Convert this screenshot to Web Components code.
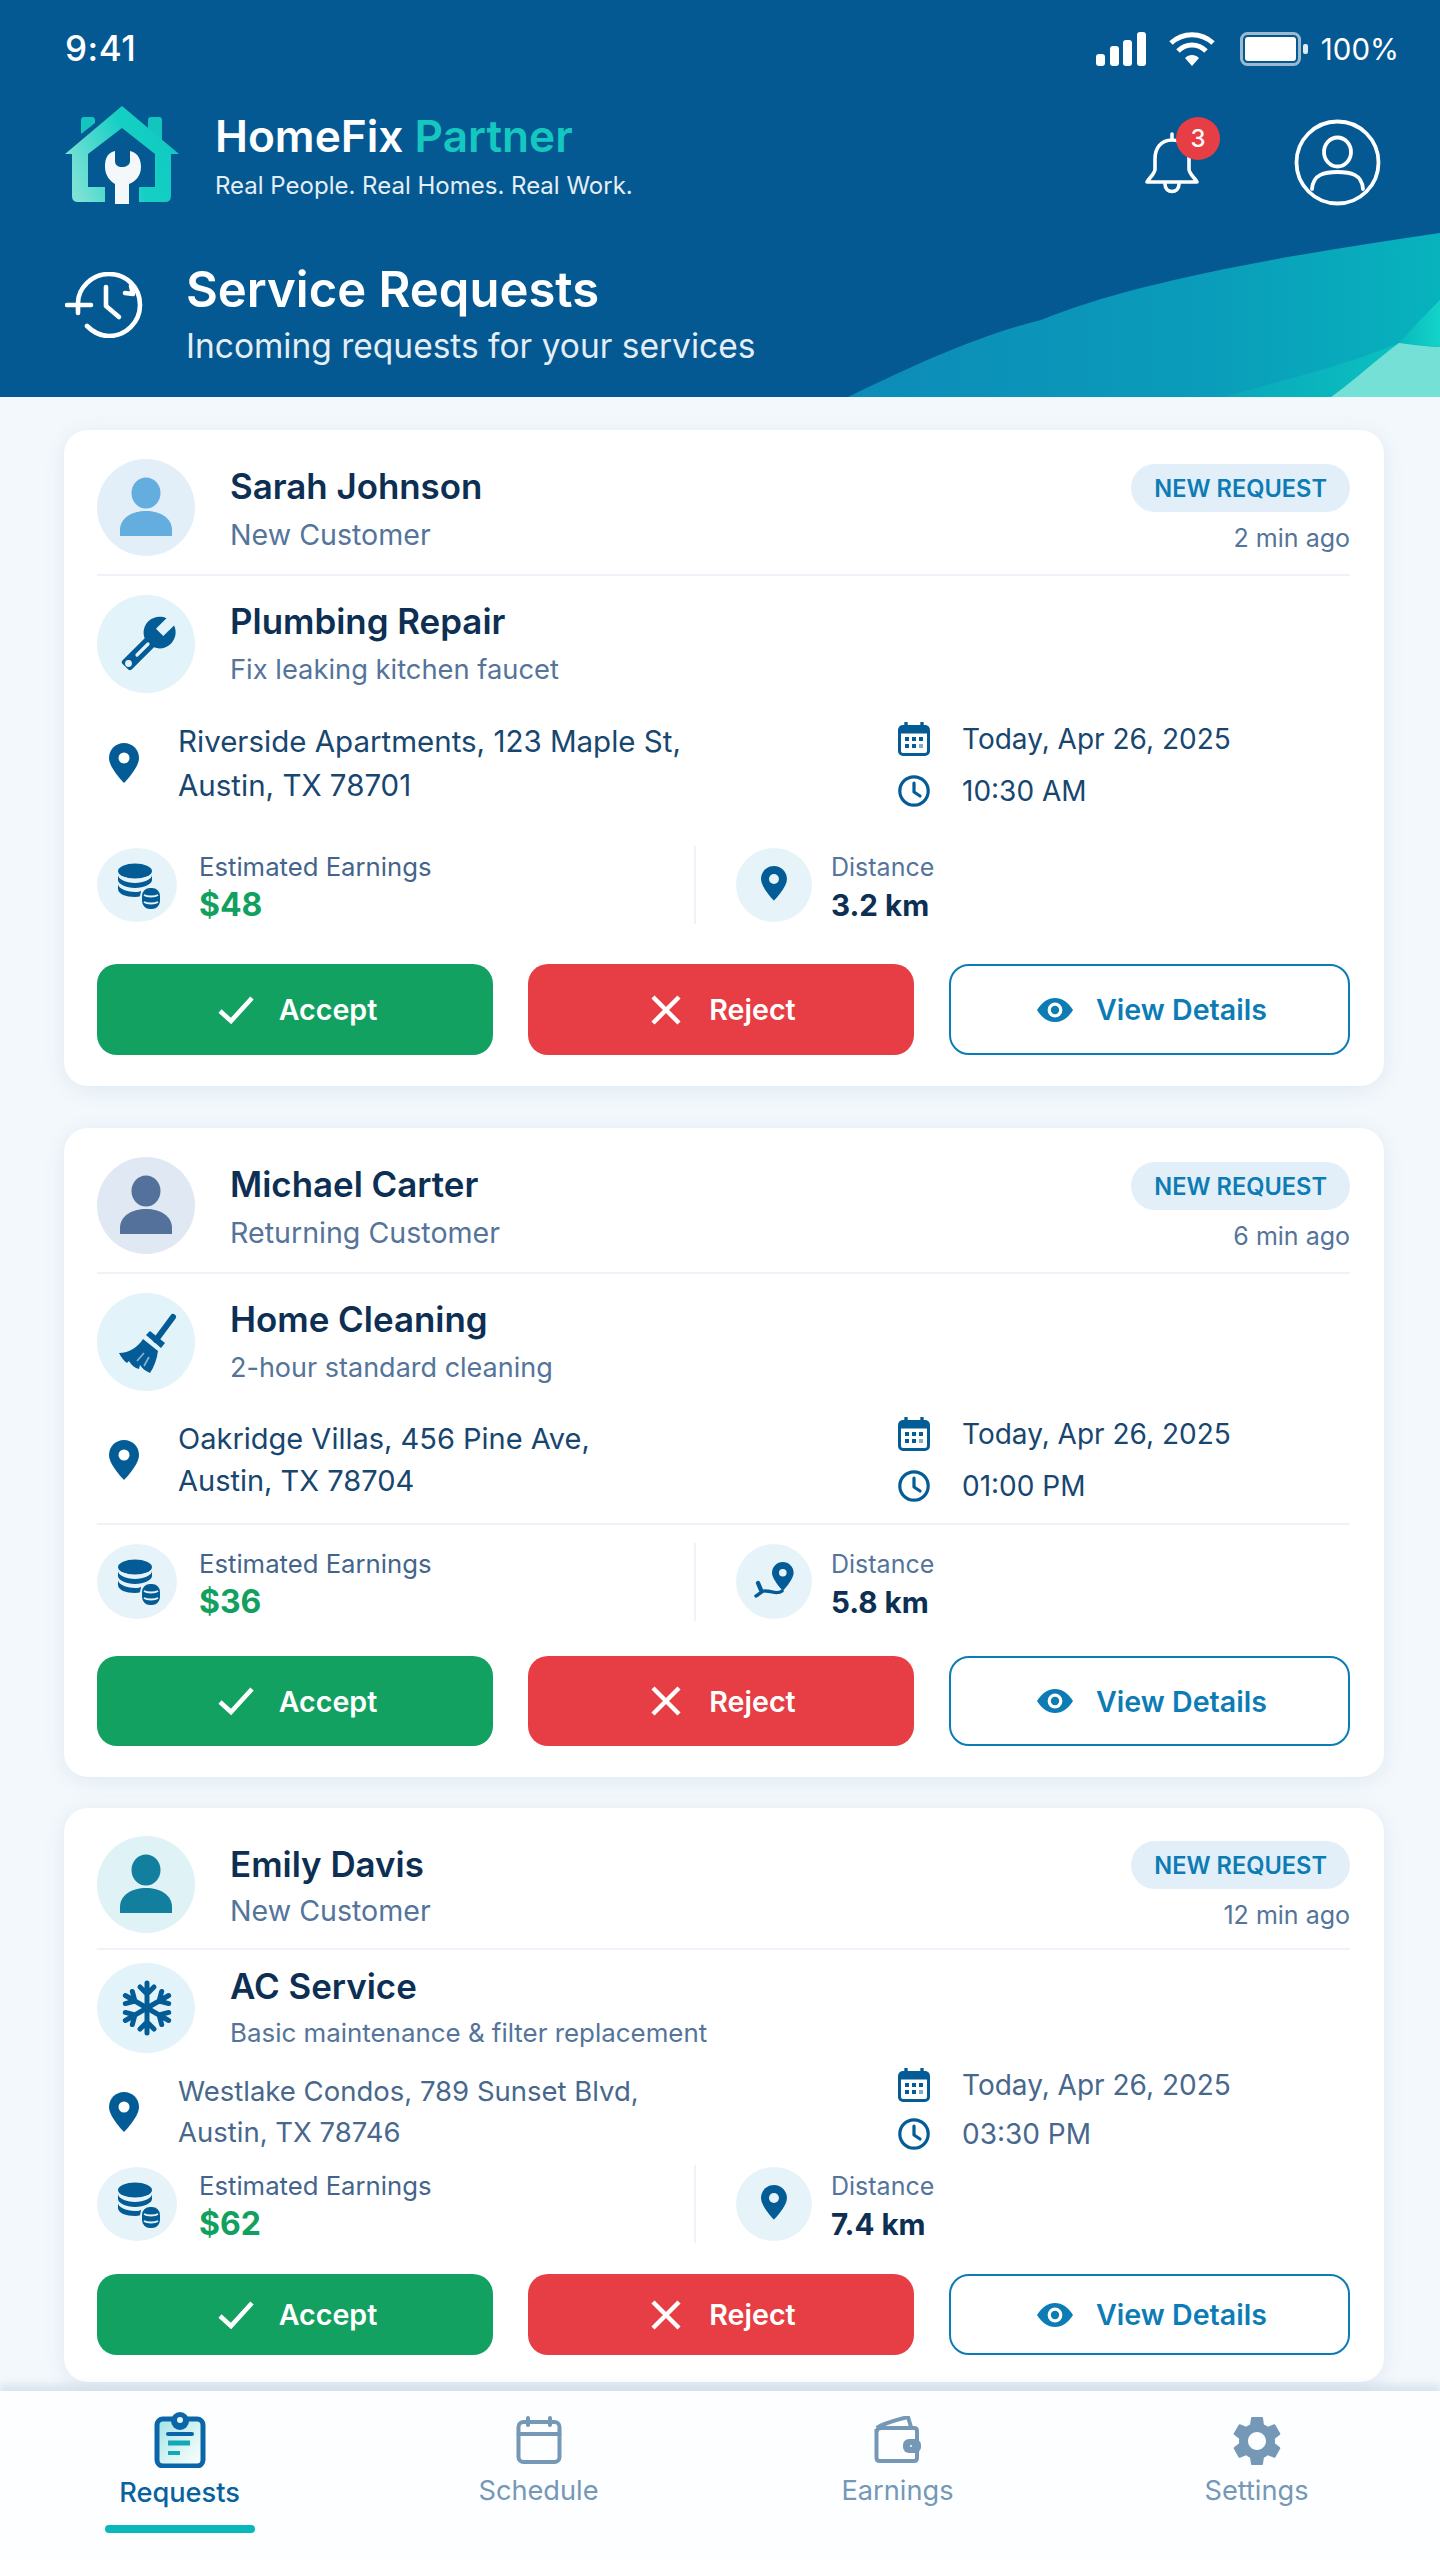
<!DOCTYPE html>
<html lang="en">
<head>
<meta charset="utf-8">
<title>HomeFix Partner</title>
<style>
  html, body { margin: 0; padding: 0; }
  body { width: 1440px; height: 2560px; overflow: hidden; background: #f3f8fc; font-family: Inter, "Liberation Sans", sans-serif; }
</style>
</head>
<body>
<app-shell>
  <app-header></app-header>
  <request-list>
    <request-card avatar="#63addf" avatar-bg="#e3eff8" service="wrench" distance-icon="pin" style="--top:28px;--head-gap:18px;--svc-gap:19px;--loc-gap:26px;--line:48px;--addr-line:44px;--addr-size:29.5px;--stat-gap:41px;--stat-h:74px;--btn-gap:42px;--btn-h:91px;--bottom:31px;--desc-size:27.3px;--dt-mb:-3px;">
      <span slot="name">Sarah Johnson</span>
      <span slot="kind">New Customer</span>
      <span slot="ago">2 min ago</span>
      <span slot="title">Plumbing Repair</span>
      <span slot="desc">Fix leaking kitchen faucet</span>
      <span slot="addr">Riverside Apartments, 123 Maple St,<br>Austin, TX 78701</span>
      <span slot="date">Today, Apr 26, 2025</span>
      <span slot="time">10:30 AM</span>
      <span slot="earn">$48</span>
      <span slot="dist">3.2 km</span>
    </request-card>
    <request-card avatar="#54719c" avatar-bg="#dfe8f3" service="broom" distance-icon="route" rule style="--top:28px;--head-gap:18px;--svc-gap:19px;--loc-gap:27px;--line:48px;--addr-line:42px;--addr-size:29px;--stat-gap:19px;--stat-h:75px;--btn-gap:37px;--btn-h:90px;--bottom:31px;--desc-size:27px;margin-top:42px;">
      <span slot="name">Michael Carter</span>
      <span slot="kind">Returning Customer</span>
      <span slot="ago">6 min ago</span>
      <span slot="title">Home Cleaning</span>
      <span slot="desc">2-hour standard cleaning</span>
      <span slot="addr">Oakridge Villas, 456 Pine Ave,<br>Austin, TX 78704</span>
      <span slot="date">Today, Apr 26, 2025</span>
      <span slot="time">01:00 PM</span>
      <span slot="earn">$36</span>
      <span slot="dist">5.8 km</span>
    </request-card>
    <request-card avatar="#127f9f" avatar-bg="#dff2f6" service="snow" distance-icon="pin" style="--top:27px;--head-gap:15px;--svc-gap:13px;--svc-h:90px;--loc-gap:18px;--line:45px;--addr-line:41px;--addr-size:27.5px;--stat-gap:14px;--stat-h:74px;--btn-gap:33px;--btn-h:81px;--bottom:27px;--dt-gap:9px;--dt-mb:6px;--addr:#47688c;--desc-size:25.9px;margin-top:31px;">
      <span slot="name">Emily Davis</span>
      <span slot="kind">New Customer</span>
      <span slot="ago">12 min ago</span>
      <span slot="title">AC Service</span>
      <span slot="desc">Basic maintenance &amp; filter replacement</span>
      <span slot="addr">Westlake Condos, 789 Sunset Blvd,<br>Austin, TX 78746</span>
      <span slot="date">Today, Apr 26, 2025</span>
      <span slot="time">03:30 PM</span>
      <span slot="earn">$62</span>
      <span slot="dist">7.4 km</span>
    </request-card>
  </request-list>
  <bottom-nav></bottom-nav>
</app-shell>

<script>
const FG = '#045c96';
const pinPath = 'M12 0C5.4 0 0 5.3 0 12c0 8 12 20 12 20s12-12 12-20C24 5.3 18.6 0 12 0z';

// service / stat glyphs, drawn on the same box as their round backdrop
const GLYPHS = {
    wrench: (bg) => `<svg width="98" height="98" viewBox="0 0 98 98">
        <g transform="translate(81 19) scale(-2.45 2.45)"><path d="M22.7 19l-9.1-9.1c.9-2.3.4-5-1.5-6.9-2-2-5-2.4-7.4-1.3L9 6 6 9 1.6 4.7C.4 7.1.9 10.1 2.9 12.1c1.9 1.9 4.6 2.4 6.9 1.5l9.1 9.1c.4.4 1 .4 1.4 0l2.3-2.3c.5-.4.5-1.1.1-1.4z" fill="${FG}"/></g>
        <circle cx="31.5" cy="68.5" r="3.4" fill="${bg}"/>
        <path d="M40 60 51 49" stroke="${bg}" stroke-width="3.2" stroke-linecap="round"/>
    </svg>`,
    broom: (bg) => `<svg width="98" height="98" viewBox="0 0 98 98">
        <path d="M76 24 59 47" stroke="${FG}" stroke-width="6" stroke-linecap="round"/>
        <path d="M49 42 53 38 68 50 64 55Z" fill="${FG}"/>
        <path d="M46 46 61 58C60 66 57 74 53 80 48 78 45 75 43 72L42 76C38 75 34 72 32 68L30 70C27 68 24 64 22 60 32 60 41 54 46 46Z" fill="${FG}"/>
        <path d="M47 60 40 68M52 64 47 73" stroke="${bg}" stroke-width="1.6" opacity=".6"/>
    </svg>`,
    snow: () => {
        let arms = '';
        for (let a = 0; a < 360; a += 60) {
            arms += `<g transform="rotate(${a} 50 45)"><path d="M50 45V20M43 24 50 31 57 24" fill="none" stroke="${FG}" stroke-width="5" stroke-linecap="round" stroke-linejoin="round"/></g>`;
        }
        return `<svg width="98" height="90" viewBox="0 0 98 90">${arms}</svg>`;
    },
    coins: (bg) => `<svg width="80" height="75" viewBox="0 0 80 75" fill="${FG}">
        <ellipse cx="38" cy="23" rx="17" ry="7.5"/>
        <path d="M21 27c0 4 8 8 17 8s17-4 17-8v5c0 4-8 8-17 8s-17-4-17-8z"/>
        <path d="M21 36c0 4 8 8 17 8 2 0 4 0 6-1v5c-2 .5-4 1-6 1-9 0-17-3-17-8z"/>
        <rect x="44" y="39" width="20" height="23" rx="9" stroke="${bg}" stroke-width="2"/>
        <path d="M47 47c3 2 11 2 14 0M47 54c3 2 11 2 14 0" fill="none" stroke="${bg}" stroke-width="1.8"/>
    </svg>`,
    pin: (bg) => `<svg width="76" height="75" viewBox="0 0 76 75">
        <g transform="translate(25 18) scale(1.08)"><path d="${pinPath}" fill="${FG}"/><circle cx="12" cy="12" r="4.6" fill="${bg}"/></g>
    </svg>`,
    route: (bg) => `<svg width="76" height="75" viewBox="0 0 76 75">
        <g transform="translate(36 18) scale(.9)"><path d="${pinPath}" fill="${FG}"/><circle cx="12" cy="12" r="4.2" fill="${bg}"/></g>
        <path d="M46 47C41 51 36 47 30 47 26 46 24 50 20 52" fill="none" stroke="${FG}" stroke-width="3.4" stroke-linecap="round"/>
        <path d="M22 39 25 46" stroke="${FG}" stroke-width="4.4" stroke-linecap="round"/>
    </svg>`
};

class AppShell extends HTMLElement {
    constructor() {
        super();
        this.attachShadow({ mode: 'open' });
        this.shadowRoot.innerHTML = `
            <style>
                :host { display: flex; flex-direction: column; width: 1440px; height: 2560px; overflow: hidden; font-family: Inter, "Liberation Sans", sans-serif; }
            </style>
            <slot></slot>`;
    }
}

class AppHeader extends HTMLElement {
    constructor() {
        super();
        this.attachShadow({ mode: 'open' });
        this.shadowRoot.innerHTML = `
            <style>
                :host { display: block; position: relative; height: 397px; flex: none; padding: 0 59px 0 65px; box-sizing: border-box; background: #045992; color: #fff; overflow: hidden; }
                .wave { position: absolute; left: 0; top: 0; }
                .status, .brand, .section { position: relative; display: flex; }
                .status { height: 94px; align-items: center; justify-content: space-between; margin-right: -18px; }
                .clock { font-size: 35px; font-weight: 500; letter-spacing: .5px; margin-top: 2px; }
                .sys { display: flex; align-items: center; margin-top: 4px; }
                .pct { font-size: 29.5px; margin-left: 13px; }
                .brand { height: 98px; margin-top: 13px; align-items: center; }
                .logo { margin: -8px 0 -9px -10px; flex: none; }
                .names { margin-left: 25px; padding-top: 6px; }
                .name { font-size: 44.2px; font-weight: 600; line-height: 56px; margin-top: -5px; }
                .name b { font-weight: 600; color: #14c8c0; }
                .tag { font-size: 24px; line-height: 40px; color: #e4eef6; margin-top: 2px; }
                .actions { margin-left: auto; display: flex; align-items: center; gap: 94px; }
                .bell { position: relative; width: 56px; height: 62px; margin-top: 14px; }
                .badge { position: absolute; left: 32px; top: -15px; width: 44px; height: 43px; border-radius: 50%; background: #e63e44; display: flex; align-items: center; justify-content: center; font-size: 24px; font-weight: 500; }
                .profile { margin-top: 13px; }
                .section { margin-top: 67px; align-items: flex-start; }
                .section svg { flex: none; }
                .stext { margin: -10px 0 0 43px; }
                .title { font-size: 49px; font-weight: 600; line-height: 56px; }
                .sub { font-size: 33.5px; line-height: 56px; color: #e4eef6; }
            </style>
            <svg class="wave" width="1440" height="397" viewBox="0 0 1440 397">
                <defs>
                    <linearGradient id="w" x1="0" x2="1"><stop offset="0" stop-color="#0d8bb8"/><stop offset=".6" stop-color="#0a9cba"/><stop offset="1" stop-color="#07b3bd"/></linearGradient>
                    <linearGradient id="w2" x1="0" x2="1"><stop offset="0" stop-color="#0aa8ba"/><stop offset="1" stop-color="#0bc6c2"/></linearGradient>
                    <linearGradient id="w3" x1="0" x2="1"><stop offset="0" stop-color="#0ab9bd"/><stop offset="1" stop-color="#13d3c9"/></linearGradient>
                </defs>
                <path d="M848 397C920 362 980 335 1041 320 1130 283 1280 256 1440 233V397Z" fill="url(#w)"/>
                <path d="M1225 397C1280 380 1340 368 1399 343L1440 347V397Z" fill="url(#w2)"/>
                <path d="M1399 343C1415 325 1428 312 1440 300V347Z" fill="url(#w3)"/>
                <path d="M1331 397C1355 380 1378 358 1399 343 1415 345 1430 347 1440 347V397Z" fill="#75e0d5"/>
            </svg>
            <div class="status">
                <span class="clock">9:41</span>
                <div class="sys">
                    <svg width="50" height="34" viewBox="0 0 50 34" fill="#fff"><rect x="0" y="22" width="9" height="12" rx="3"/><rect x="14" y="14" width="9" height="20" rx="3"/><rect x="27" y="8" width="9" height="26" rx="3"/><rect x="41" y="0" width="9" height="34" rx="3"/></svg>
                    <svg style="margin-left:23px" width="46" height="34" viewBox="0 0 46 34" fill="none" stroke="#fff" stroke-width="5"><path d="M2 11C14 0 32 0 44 11M9 19C17 11 29 11 37 19"/><path d="M23 34 16 26C20 22 26 22 30 26Z" fill="#fff" stroke="none"/></svg>
                    <svg style="margin-left:25px" width="68" height="34" viewBox="0 0 68 34"><rect x="1.5" y="1.5" width="58" height="31" rx="6" fill="none" stroke="#9db9d0" stroke-width="3"/><rect x="5" y="5" width="51" height="24" rx="3" fill="#fff"/><rect x="63" y="12" width="5" height="10" rx="2" fill="#dfeaf2"/></svg>
                    <span class="pct">100%</span>
                </div>
            </div>
            <div class="brand">
                <svg class="logo" width="135" height="115" viewBox="0 0 135 115">
                    <defs><linearGradient id="l" x1="0" x2="1" y1=".6" y2=".3"><stop offset="0" stop-color="#7fe2d6"/><stop offset=".55" stop-color="#16cfc4"/><stop offset="1" stop-color="#0fcac2"/></linearGradient></defs>
                    <path d="M26 35V21Q26 18 29 18H37Q40 18 40 21V24ZM93 32V21Q93 18 96 18H104Q107 18 107 21V46Z" fill="#12c6bf"/>
                    <path d="M67 7 124 55H116V97Q116 103 110 103H84V88H100V55L67 29 33 55V88H50V103H23Q17 103 17 97V55H10Z" fill="url(#l)"/>
                    <path d="M60 52C51 54 50 62 50 68 50 77 56 83 60 85V105H74V85C80 83 86 77 86 68 86 62 84 54 75 52V62C75 66 71 68 67 68 63 68 60 66 60 62Z" fill="#f5f8fb"/>
                </svg>
                <div class="names">
                    <div class="name">HomeFix <b>Partner</b></div>
                    <div class="tag">Real People. Real Homes. Real Work.</div>
                </div>
                <div class="actions">
                    <div class="bell">
                        <svg width="56" height="62" viewBox="0 0 56 62" fill="none" stroke="#fff" stroke-width="3.6" stroke-linecap="round" stroke-linejoin="round"><path d="M28 2V8M28 8C17 8 11 16 11 27V37C11 42 5 46 3 50H53C51 46 45 42 45 37V27C45 16 39 8 28 8Z"/><path d="M21 52C21 62 35 62 35 52"/></svg>
                        <span class="badge">3</span>
                    </div>
                    <svg class="profile" width="87" height="87" viewBox="0 0 87 87" fill="none" stroke="#fff" stroke-width="3.8" stroke-linecap="round"><circle cx="43.5" cy="43.5" r="41"/><ellipse cx="43.5" cy="33" rx="13.5" ry="14.5"/><path d="M18 70C19 55 31 53 43.5 53S68 55 69 70"/></svg>
                </div>
            </div>
            <div class="section">
                <svg width="78" height="66" viewBox="0 0 78 66" fill="none" stroke="#fff" stroke-width="4.6" stroke-linecap="round" stroke-linejoin="round"><path d="M13 31C13 16 27 2 44 2 61 2 75 15 75 33 75 50 61 64 44 64 35 64 28 60 22 54"/><path d="M2 33H26M13 33V41"/><path d="M41 15V34L54 45"/><path d="M66 14 68 22 60 21"/></svg>
                <div class="stext">
                    <div class="title">Service Requests</div>
                    <div class="sub">Incoming requests for your services</div>
                </div>
            </div>`;
    }
}

class RequestList extends HTMLElement {
    constructor() {
        super();
        this.attachShadow({ mode: 'open' });
        this.shadowRoot.innerHTML = `
            <style>
                :host { display: flex; flex-direction: column; flex: 1; min-height: 0; padding: 33px 56px 0 64px; overflow: hidden; }
            </style>
            <slot></slot>`;
    }
}

class RequestCard extends HTMLElement {
    constructor() {
        super();
        this.attachShadow({ mode: 'open' });
    }

    connectedCallback() {
        const svcBg = '#e2f4f9';
        const statBg = '#e6f4f9';
        const fig = this.getAttribute('avatar');
        const rule = this.hasAttribute('rule');
        this.shadowRoot.innerHTML = `
            <style>
                :host { display: block; flex: none; background: #fff; border-radius: 24px; box-shadow: 0 4px 22px rgba(32,84,134,.09); padding: var(--top) 34px var(--bottom) 33px; color: #0c2f53; }
                .head, .svc { display: flex; align-items: center; }
                .head { height: 98px; }
                .disc { flex: none; display: flex; align-items: center; justify-content: center; border-radius: 50%; }
                .avatar { width: 98px; height: 97px; background: ${this.getAttribute('avatar-bg')}; }
                .who, .what { margin-left: 35px; padding-top: 6px; line-height: var(--line); }
                .strong { font-size: 34.9px; font-weight: 600; color: #0c2f53; }
                .soft { font-size: 28.6px; color: #54749a; margin-top: 1px; }
                .head-r { margin-left: auto; align-self: flex-start; display: flex; flex-direction: column; align-items: flex-end; padding-top: 6px; }
                .pill { height: 48px; padding: 0 23px; border-radius: 24px; background: #e2eff8; display: flex; align-items: center; font-size: 23.6px; font-weight: 600; color: #0d7cb5; }
                .ago { font-size: 25px; color: #54749a; margin-top: 6px; line-height: 40px; }
                .divider { height: 2px; background: #edf3f9; }
                .rule1 { margin-top: var(--head-gap); }
                .svc { margin-top: var(--svc-gap); height: var(--svc-h, 98px); }
                .svc .disc { width: 98px; height: var(--svc-h, 98px); background: ${svcBg}; }
                .what { padding-top: 2px; }
                .desc { font-size: var(--desc-size); color: #54749a; margin-top: 1px; }
                .loc { display: flex; margin-top: var(--loc-gap); align-items: center; height: calc(var(--addr-line) * 2); }
                .addr-wrap { display: flex; align-items: center; width: 801px; padding-left: 12px; box-sizing: border-box; }
                .addr-wrap svg { flex: none; }
                .addr { margin-left: 39px; font-size: var(--addr-size); line-height: var(--addr-line); color: var(--addr, #17466f); }
                .when { display: flex; flex-direction: column; gap: var(--dt-gap, 12px); font-size: 28px; color: var(--addr, #17466f); margin-bottom: var(--dt-mb, 0); }
                .when div { display: flex; align-items: center; height: 40px; gap: 32px; }
                .rule2 { margin-top: 21px; }
                .stats { display: flex; align-items: center; margin-top: var(--stat-gap); height: var(--stat-h); }
                .stat { display: flex; align-items: center; }
                .earn { width: 599px; border-right: 2px solid #edf3f9; box-sizing: border-box; }
                .stat .disc { width: 80px; height: var(--stat-h); background: ${statBg}; }
                .dist { margin-left: 40px; }
                .dist .disc { width: 76px; }
                .nums { margin-left: 22px; padding-top: 2px; }
                .dist .nums { margin-left: 19px; }
                .lbl { font-size: 25.7px; line-height: 38px; color: #43658c; }
                .dist .lbl { font-size: 25px; color: #54749a; }
                .val { font-size: 29.6px; font-weight: 700; line-height: 38px; color: #0c2f53; }
                .green { font-size: 32px; color: #12a05f; }
                .btns { display: grid; grid-template-columns: 396px 386px 1fr; gap: 35px; margin-top: var(--btn-gap); height: var(--btn-h); }
            </style>
            <div class="head">
                <div class="disc avatar">
                    <svg width="98" height="97" viewBox="0 0 98 97" fill="${fig}"><ellipse cx="49" cy="34" rx="14.5" ry="15.5"/><path d="M23 77V71C23 59 35 52 49 52S75 59 75 71V77Z"/></svg>
                </div>
                <div class="who">
                    <div class="strong"><slot name="name"></slot></div>
                    <div class="soft"><slot name="kind"></slot></div>
                </div>
                <div class="head-r">
                    <div class="pill">NEW REQUEST</div>
                    <div class="ago"><slot name="ago"></slot></div>
                </div>
            </div>
            <div class="divider rule1"></div>
            <div class="svc">
                <div class="disc">${GLYPHS[this.getAttribute('service')](svcBg)}</div>
                <div class="what">
                    <div class="strong"><slot name="title"></slot></div>
                    <div class="desc"><slot name="desc"></slot></div>
                </div>
            </div>
            <div class="loc">
                <div class="addr-wrap">
                    <svg width="30" height="40" viewBox="0 0 24 32"><path d="${pinPath}" fill="${FG}"/><circle cx="12" cy="12" r="4.4" fill="#fff"/></svg>
                    <div class="addr"><slot name="addr"></slot></div>
                </div>
                <div class="when">
                    <div>
                        <svg width="32" height="34" viewBox="0 0 32 34"><rect x="1.5" y="4.5" width="29" height="28" rx="3.5" fill="#fff" stroke="${FG}" stroke-width="3"/><rect x="1.5" y="4.5" width="29" height="7" fill="${FG}"/><path d="M8 1V6M24 1V6" stroke="${FG}" stroke-width="3.4" stroke-linecap="round"/><g fill="${FG}"><rect x="7" y="15" width="4" height="4"/><rect x="14" y="15" width="4" height="4"/><rect x="21" y="15" width="4" height="4"/><rect x="7" y="22" width="4" height="4"/><rect x="14" y="22" width="4" height="4"/><rect x="21" y="22" width="4" height="4" opacity=".5"/></g></svg>
                        <slot name="date"></slot>
                    </div>
                    <div>
                        <svg width="32" height="32" viewBox="0 0 32 32" fill="none" stroke="${FG}" stroke-width="3.2" stroke-linecap="round" stroke-linejoin="round"><circle cx="16" cy="16" r="14.2"/><path d="M16 8V17L22 21"/></svg>
                        <slot name="time"></slot>
                    </div>
                </div>
            </div>
            ${rule ? '<div class="divider rule2"></div>' : ''}
            <div class="stats">
                <div class="stat earn">
                    <div class="disc">${GLYPHS.coins(statBg)}</div>
                    <div class="nums">
                        <div class="lbl">Estimated Earnings</div>
                        <div class="val green"><slot name="earn"></slot></div>
                    </div>
                </div>
                <div class="stat dist">
                    <div class="disc">${GLYPHS[this.getAttribute('distance-icon')](statBg)}</div>
                    <div class="nums">
                        <div class="lbl">Distance</div>
                        <div class="val"><slot name="dist"></slot></div>
                    </div>
                </div>
            </div>
            <div class="btns">
                <action-button kind="accept">Accept</action-button>
                <action-button kind="reject">Reject</action-button>
                <action-button kind="view">View Details</action-button>
            </div>`;
    }
}

class ActionButton extends HTMLElement {
    constructor() {
        super();
        this.attachShadow({ mode: 'open' });
    }

    connectedCallback() {
        const icons = {
            accept: `<svg width="36" height="28" viewBox="0 0 36 28" fill="none" stroke="#fff" stroke-width="4.6"><path d="M2 15 13 25 34 2"/></svg>`,
            reject: `<svg width="30" height="30" viewBox="0 0 30 30" fill="none" stroke="#fff" stroke-width="4.4"><path d="M2 2 28 28M28 2 2 28"/></svg>`,
            view: `<svg width="36" height="24" viewBox="0 0 36 24"><path d="M0 12C5 4 11 0 18 0S31 4 36 12C31 20 25 24 18 24S5 20 0 12Z" fill="#0d7cb5"/><circle cx="18" cy="12" r="7.4" fill="#fff"/><circle cx="18" cy="12" r="4.2" fill="#0d7cb5"/></svg>`
        };
        const kind = this.getAttribute('kind');
        this.shadowRoot.innerHTML = `
            <style>
                :host { display: flex; align-items: center; justify-content: center; gap: 25px; border-radius: 20px; padding-left: 5px; font-size: 28.6px; font-weight: 600; color: #fff; box-sizing: border-box; }
                :host([kind="accept"]) { background: #12a160; }
                :host([kind="reject"]) { background: #e63e44; gap: 28px; }
                :host([kind="view"]) { background: #fff; color: #0d7cb5; border: 2px solid #0d7cb5; gap: 23px; }
            </style>
            ${icons[kind]}<slot></slot>`;
    }
}

class BottomNav extends HTMLElement {
    constructor() {
        super();
        this.attachShadow({ mode: 'open' });
        const grey = '#7498b6';
        this.shadowRoot.innerHTML = `
            <style>
                :host { position: relative; display: grid; grid-template-columns: repeat(4, 1fr); height: 169px; flex: none; padding-right: 4px; box-sizing: border-box; background: #fdfeff; box-shadow: 0 -7px 7px rgba(60,110,155,.13); font-size: 27.2px; color: ${grey}; }
                .item { display: flex; flex-direction: column; align-items: center; }
                .ico { height: 76px; padding-top: 21px; box-sizing: border-box; display: flex; align-items: flex-start; justify-content: center; margin-top: 4px; }
                .lbl { line-height: 36px; margin-top: 2px; }
                .on { color: #07629e; font-weight: 500; margin-top: -6px; }
                .on .ico { padding-top: 27px; margin-top: 0; height: 86px; }
                .on .lbl { margin-top: 4px; }
                .bar { width: 150px; height: 8px; border-radius: 4px; background: #08b8bb; margin-top: 14px; }
            </style>
            <div class="item on">
                <div class="ico"><svg width="52" height="56" viewBox="0 0 52 56">
                    <defs><linearGradient id="c" x1="0" x2="1" y1="0" y2="1"><stop offset="0" stop-color="#9fe3e6"/><stop offset=".55" stop-color="#d8f4f3"/><stop offset="1" stop-color="#fff"/></linearGradient></defs>
                    <rect x="3" y="7" width="46" height="47" rx="6" fill="url(#c)" stroke="#0a66a8" stroke-width="5"/>
                    <circle cx="26" cy="9" r="9" fill="#0a66a8"/><circle cx="26" cy="8" r="3" fill="#e8f6fa"/>
                    <path d="M14 22H38" stroke="#0a66a8" stroke-width="4" stroke-linecap="round"/>
                    <path d="M14 31H36" stroke="#10a9b5" stroke-width="5"/>
                    <path d="M14 41H26" stroke="#10a9b5" stroke-width="4"/>
                </svg></div>
                <div class="lbl">Requests</div>
                <div class="bar"></div>
            </div>
            <div class="item">
                <div class="ico"><svg width="46" height="48" viewBox="0 0 46 48" fill="none" stroke="${grey}" stroke-width="4" stroke-linecap="round"><rect x="2.5" y="6" width="41" height="40" rx="5"/><path d="M2.5 18H43.5M12 2V9M34 2V9"/></svg></div>
                <div class="lbl">Schedule</div>
            </div>
            <div class="item">
                <div class="ico"><svg width="48" height="48" viewBox="0 0 48 48" fill="none" stroke="${grey}" stroke-width="4" stroke-linejoin="round"><path d="M2.5 13V42Q2.5 45 6 45H40Q43 45 43 42V15Q43 12 40 12H7Q3 12 2.5 16"/><path d="M3 12C6 9 22 4 34 1L37 11"/><rect x="29" y="23" width="18" height="14" rx="6" fill="${grey}" stroke="none"/><circle cx="37" cy="30" r="3" fill="#fff"/></svg></div>
                <div class="lbl">Earnings</div>
            </div>
            <div class="item">
                <div class="ico"><svg width="50" height="50" viewBox="2 2 20 20" fill="${grey}"><path d="M19.14 12.94c.04-.3.06-.61.06-.94 0-.32-.02-.64-.07-.94l2.03-1.58c.18-.14.23-.41.12-.61l-1.92-3.32c-.12-.22-.37-.29-.59-.22l-2.39.96c-.5-.38-1.03-.7-1.62-.94l-.36-2.54c-.04-.24-.24-.41-.48-.41h-3.84c-.24 0-.43.17-.47.41l-.36 2.54c-.59.24-1.13.57-1.62.94l-2.39-.96c-.22-.08-.47 0-.59.22L2.74 8.87c-.12.21-.08.47.12.61l2.03 1.58c-.05.3-.09.63-.09.94s.02.64.07.94l-2.03 1.58c-.18.14-.23.41-.12.61l1.92 3.32c.12.22.37.29.59.22l2.39-.96c.5.38 1.03.7 1.62.94l.36 2.54c.05.24.24.41.48.41h3.84c.24 0 .44-.17.47-.41l.36-2.54c.59-.24 1.13-.56 1.62-.94l2.39.96c.22.08.47 0 .59-.22l1.92-3.32c.12-.22.07-.47-.12-.61l-2.01-1.58zM12 15.6c-1.98 0-3.6-1.62-3.6-3.6s1.62-3.6 3.6-3.6 3.6 1.62 3.6 3.6-1.62 3.6-3.6 3.6z"/></svg></div>
                <div class="lbl">Settings</div>
            </div>`;
    }
}

customElements.define('app-shell', AppShell);
customElements.define('app-header', AppHeader);
customElements.define('request-list', RequestList);
customElements.define('request-card', RequestCard);
customElements.define('action-button', ActionButton);
customElements.define('bottom-nav', BottomNav);
</script>
</body>
</html>
